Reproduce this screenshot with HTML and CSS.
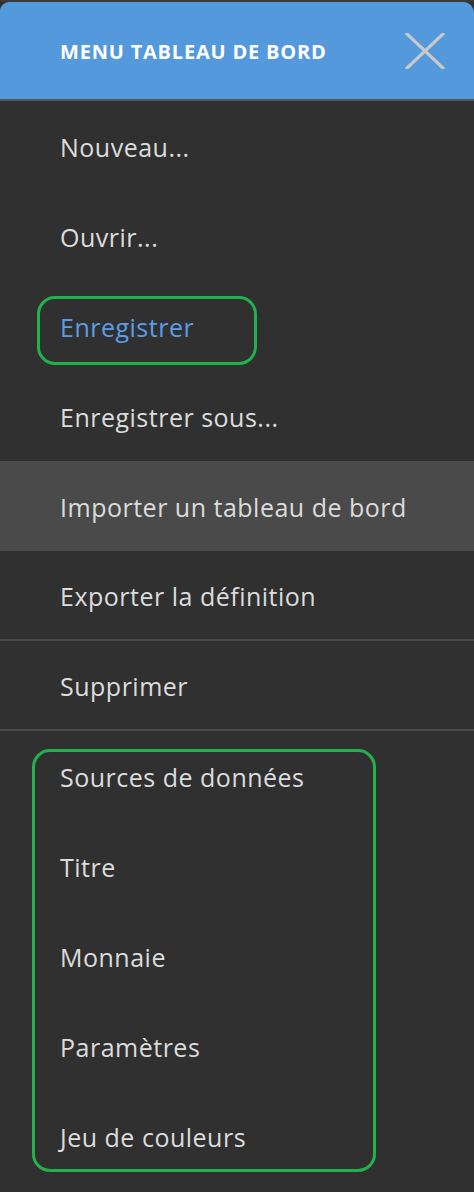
FILE: index.html
```html
<!DOCTYPE html>
<html lang="fr">
<head>
<meta charset="utf-8">
<title>Menu tableau de bord</title>
<link rel="stylesheet" href="styles.css">
</head>
<body>
<div class="menu">
  <div class="menu-header">
    <span class="menu-title">MENU TABLEAU DE BORD</span>
    <button class="close" aria-label="Fermer">
      <svg width="40" height="36" viewBox="0 0 40 36"><path d="M1 0 L39 36 M39 0 L1 36" stroke="#c9c9c9" stroke-width="3.2" fill="none"/></svg>
    </button>
  </div>
  <ul class="items">
    <li class="item">Nouveau...</li>
    <li class="item">Ouvrir...</li>
    <li class="item active">Enregistrer</li>
    <li class="item">Enregistrer sous...</li>
    <li class="item hover">Importer un tableau de bord</li>
    <li class="item sep">Exporter la définition</li>
    <li class="item sep">Supprimer</li>
    <li class="item">Sources de données</li>
    <li class="item">Titre</li>
    <li class="item">Monnaie</li>
    <li class="item">Paramètres</li>
    <li class="item">Jeu de couleurs</li>
  </ul>
  <div class="mark mark-save"></div>
  <div class="mark mark-data"></div>
</div>
</body>
</html>
```
FILE: styles.css
```css
html, body {
  margin: 0;
  padding: 0;
  background: #303030;
}
body {
  font-family: "Open Sans", "Noto Sans", sans-serif;
  width: 474px;
  height: 1192px;
  overflow: hidden;
}
.menu {
  position: relative;
  background: #303030;
  border-top: 2px solid #3a3a3a;
}
.menu-header {
  height: 97px;
  background: #5599dd;
  border-radius: 9px 11px 0 0;
  border-bottom: 2px solid #555;
  display: flex;
  align-items: center;
  justify-content: space-between;
  padding: 0 29px 0 60px;
}
.menu-title {
  color: #fff;
  font-weight: 700;
  font-size: 20px;
  letter-spacing: 0.8px;
  margin-top: 2px;
}
.close {
  background: none;
  border: 0;
  padding: 0;
  width: 40px;
  height: 36px;
  display: flex;
}
.items {
  list-style: none;
  margin: 0;
  padding: 0;
}
.item {
  height: 90px;
  display: flex;
  align-items: center;
  padding-left: 60px;
  padding-top: 2px;
  box-sizing: border-box;
  color: #dcdcdc;
  font-size: 25px;
  letter-spacing: 0.5px;
}
.item.active { color: #5b9ee6; }
.item.hover { background: #4a4a4a; }
.item.sep {
  border-bottom: 2px solid #4a4a4a;
}
.mark {
  position: absolute;
  border: 3px solid #22b14c;
  border-radius: 18px;
}
.mark-save {
  left: 37px;
  top: 294px;
  width: 214px;
  height: 63px;
}
.mark-data {
  left: 32px;
  top: 747px;
  width: 338px;
  height: 417px;
}
```
